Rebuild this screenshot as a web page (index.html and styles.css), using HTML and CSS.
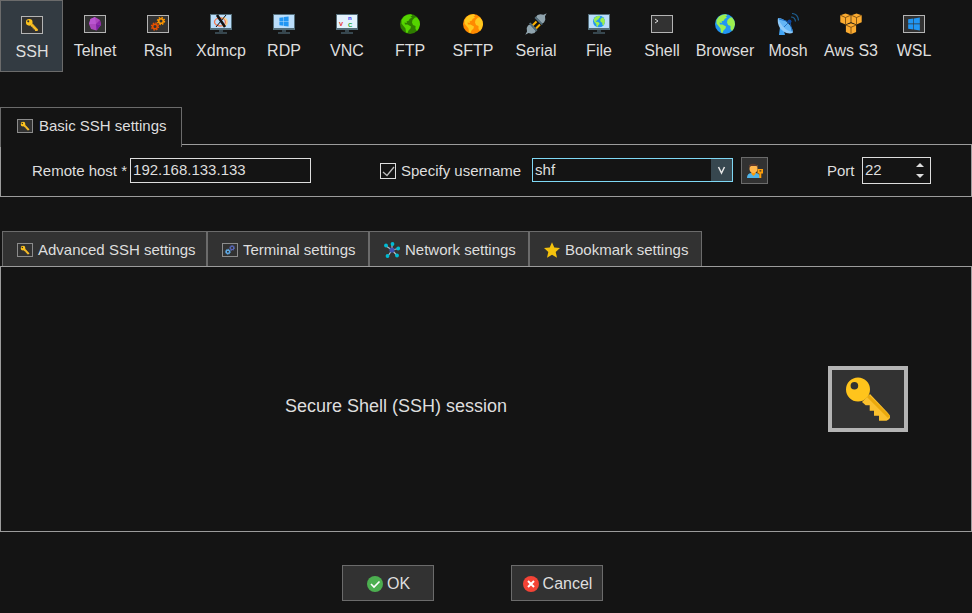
FILE: index.html
```html
<!DOCTYPE html>
<html lang="en">
<head>
<meta charset="utf-8">
<title>Session settings</title>
<link rel="stylesheet" href="styles.css">
</head>
<body>
<svg class="defs" aria-hidden="true">
  <symbol id="key" viewBox="0 0 72 58">
    <path d="M30 32 33.7 35.3H37.7V40.7H42V45.7H47V50.7H54.5Q58.5 49 58 46.5Q57.500 44.500 55.500 42.500L38 24Z" fill="#fbc02d"/>
    <path d="M36 26 57 47" stroke="#eaa80c" stroke-width="3" fill="none"/>
    <path fill-rule="evenodd" d="M26 7.400a12 12 0 1 1 0 24 12 12 0 0 1 0-24Zm-3.600 4.600a3.800 3.800 0 1 0 0 7.600 3.800 3.800 0 0 0 0-7.600Z" fill="#ffc41c"/>
  </symbol>
  <symbol id="gears" viewBox="0 0 20 16">
    <g fill="none" stroke="currentColor">
      <circle cx="7" cy="10.500" r="2.300" stroke-width="1.600"/>
      <circle cx="7" cy="10.500" r="3.500" stroke-width="1.400" stroke-dasharray="1.500 1.250"/>
    </g>
    <g fill="none">
      <circle cx="13" cy="5" r="2.300" stroke-width="1.600"/>
      <circle cx="13" cy="5" r="3.500" stroke-width="1.400" stroke-dasharray="1.500 1.250"/>
    </g>
  </symbol>
  <symbol id="monitor" viewBox="0 0 22 22">
    <path d="M9 16h4v3h4v2H5v-2h4Z" fill="#37474f"/>
    <path d="M0 1h22v16H0Z" fill="#546e7a"/>
    <path d="M1 2h20v13H1Z" fill="#bbdefb"/>
  </symbol>
  <symbol id="windows" viewBox="0 0 12 12">
    <path d="M1 2 5.500 1.300V5.600H1ZM6 1.200 11 .5V5.600H6ZM1 6.200H5.500V10.700L1 10ZM6 6.200H11V11.500L6 10.800Z" fill="#2196f3"/>
  </symbol>
  <symbol id="globe" viewBox="0 0 20 20">
    <circle cx="10" cy="10" r="10" class="sea"/>
    <path class="land" d="M1.500 6 4 2.500 7.500.8 11 .3 12.500 1.500 10.500 2.500 12 3.500 9.500 5 9 6.500 6.500 7.500 7 9 4.500 8.500 5 10.500 7.500 10.500 11 12.500 10.500 14.500 8.500 16.500 7.500 19 6 18.500 5.500 14.500 3.500 12 1.500 9.500ZM12.500 6 15 3.500 17 3.500 19.500 7 20 10.500 18.500 15 17 17 15.500 15 15.500 12 13 11 12 8.500Z"/>
  </symbol>
  <symbol id="cube" viewBox="0 0 11 12">
    <path d="M5.500.5 10.700 2.200V9.300L5.500 11.500.3 9.300V2.200Z" fill="#fbab30"/>
    <path d="M.3 2.200 5.500 4.500l5.200-2.300M5.500 4.500v7" fill="none" stroke="#6d430c" stroke-width=".8"/>
  </symbol>
</svg>

<nav class="toolbar" aria-label="Session type">
  <button class="type active" type="button"><svg class="icon framed" viewBox="0 0 20 16"><use href="#key"/></svg><span>SSH</span></button>
  <button class="type" type="button"><svg class="icon framed" viewBox="0 0 20 16"><path d="m10 1 5 3 1 5-4.500 5.500L6 13 4 8l1.500-5Z" fill="#ab47bc"/><path d="m10 1 1 7-7 0 1.500-5Z" fill="#ba55d0"/><path d="m11 8 5 1-4.500 5.500Z" fill="#7b1fa2"/><path d="m11 8 4-4 1 5Z" fill="#8e24aa"/></svg><span>Telnet</span></button>
  <button class="type" type="button"><svg class="icon framed gears-hot" viewBox="0 0 20 16"><use href="#gears"/></svg><span>Rsh</span></button>
  <button class="type" type="button"><svg class="icon" viewBox="0 0 22 22"><use href="#monitor"/><ellipse cx="10" cy="9" rx="5.500" ry="4" fill="none" stroke="#f4774f" stroke-width="1.300"/><path d="M12 5q5 0 5 4t-5 4" fill="none" stroke="#ffcc80" stroke-width="1.500"/><path d="m7 2 8 12" stroke="#111" stroke-width="2.600"/><path d="M16 2 6 14" stroke="#111" stroke-width="1"/></svg><span>Xdmcp</span></button>
  <button class="type" type="button"><svg class="icon" viewBox="0 0 22 22"><use href="#monitor"/><use href="#windows" x="5" y="3" width="12" height="11"/></svg><span>RDP</span></button>
  <button class="type" type="button"><svg class="icon vnc" viewBox="0 0 22 22"><use href="#monitor"/><path d="M1 2h20v13H1Z" fill="#e3f2fd"/><text x="3" y="13" fill="#e91e1e">V</text><text x="12" y="7" fill="#2b35f0">n</text><text x="12" y="14" fill="#18a52c">C</text></svg><span>VNC</span></button>
  <button class="type" type="button"><svg class="icon globe-green" viewBox="0 0 22 22"><use href="#globe" x="1" y="1" width="20" height="20"/></svg><span>FTP</span></button>
  <button class="type" type="button"><svg class="icon globe-orange" viewBox="0 0 22 22"><use href="#globe" x="1" y="1" width="20" height="20"/></svg><span>SFTP</span></button>
  <button class="type" type="button"><svg class="icon" viewBox="0 0 22 22"><path d="m7.500 12.500 4-4M11 15.500l4-4" stroke="#ffb300" stroke-width="2"/><path d="m.3 21.700 1.700-3.200-.3-3.500L3 12.500l2-1L11 18l-1.500 2-3 .8-3-.8Z" fill="#90a4ae"/><path d="m4 10.500 1.500-1 7 7.500-1.200 1.500Z" fill="#546e7a"/><path d="m21.700.3-1.700 3 .3 3.500L19 9.500l-2 1L11 4l1.500-2 3-.8 3 .5Z" fill="#90a4ae"/><path d="m9.500 5 1.200-1.500L18 11l-1.500 1Z" fill="#546e7a"/></svg><span>Serial</span></button>
  <button class="type" type="button"><svg class="icon globe-blue" viewBox="0 0 22 22"><use href="#monitor"/><use href="#globe" x="5" y="2.500" width="12" height="12"/></svg><span>File</span></button>
  <button class="type" type="button"><svg class="icon framed" viewBox="0 0 20 16"><path d="m3 3 3 2-3 2" fill="none" stroke="#ddd"/></svg><span>Shell</span></button>
  <button class="type" type="button"><svg class="icon globe-blue" viewBox="0 0 22 22"><use href="#globe" x="1" y="1" width="20" height="20"/></svg><span>Browser</span></button>
  <button class="type" type="button"><svg class="icon" viewBox="0 0 22 22"><path d="M3 14 7 18l1 4H2Z" fill="#42a5f5"/><path d="M1 5C0 10 2 15 6 18s8 3 10 1.500Z" fill="#90caf9"/><path d="M1 5q5 0 10 5t5 9.500Q10 18 6 13.500T1 5Z" fill="#64b5f6"/><path d="m2 6 11 3 2 9M7 14l5-5" stroke="#1565c0" stroke-width=".8" fill="none"/><circle cx="12.500" cy="8.500" r="2" fill="#0d47a1"/><path d="M14 4q4 0 4.500 4.500M15 .5q6 .5 6.500 7" stroke="#1e5f91" stroke-width="1.200" fill="none"/></svg><span>Mosh</span></button>
  <button class="type" type="button"><svg class="icon" viewBox="0 0 22 22"><use href="#cube" width="11" height="12" y="0"/><use href="#cube" x="11" width="11" height="12"/><use href="#cube" x="5.500" y="9.800" width="11" height="12"/></svg><span>Aws S3</span></button>
  <button class="type" type="button"><svg class="icon framed" viewBox="0 0 20 16"><use href="#windows" x="3" y="1" width="14" height="14"/></svg><span>WSL</span></button>
</nav>

<main>
  <section class="basic">
    <h2 class="basic-tab"><svg class="small framed" viewBox="0 0 14 12"><use href="#key"/></svg><span>Basic SSH settings</span></h2>
    <form class="panel fields">
      <div class="field">
        <label for="host">Remote host *</label>
        <input class="box host" id="host" type="text" value="192.168.133.133">
      </div>
      <div class="field">
        <input class="check" id="specify" type="checkbox" checked>
        <label class="check-label" for="specify">Specify username</label>
        <span class="combo">
          <select class="box" aria-label="Username"><option>shf</option></select>
          <svg class="combo-arrow" viewBox="0 0 20 22"><path d="m7 8 3 6 3-6" fill="none" stroke="#e6e6e6" stroke-width="1.500"/></svg>
        </span>
        <button class="user-button" type="button" aria-label="Manage users"><svg viewBox="0 0 18 16"><path d="M1 15q0-5 5-5h3q5 0 5 5Z" fill="#4fb3e8"/><path d="M5.500 9h4v2l-2 2-2-2Z" fill="#ff9800"/><path d="M3.500 4Q3 10 7.500 10T11.500 4V2.500h-8Z" fill="#ffb74d"/><path d="M3 5Q2.500.8 7 .8T12 5L10.500 3 5 3Z" fill="#5d3b2e"/><path fill-rule="evenodd" d="M11.500 6H17v4.500h-1.700V15h-2v-4.500h-1.800Zm2 1.200h1.800V8.500H13.500Z" fill="#ff9f0a"/></svg></button>
      </div>
      <div class="field">
        <label class="port-label" for="port">Port</label>
        <span class="box spinner">
          <input id="port" type="number" value="22">
          <span class="steps">
            <button type="button" aria-label="Increase port"><svg viewBox="0 0 8 4"><path d="M0 4 4 0l4 4Z"/></svg></button>
            <button type="button" aria-label="Decrease port"><svg viewBox="0 0 8 4"><path d="M0 0h8L4 4Z"/></svg></button>
          </span>
        </span>
      </div>
    </form>
  </section>

  <section class="advanced">
    <div class="tabs">
      <button class="tab" type="button"><svg class="small framed" viewBox="0 0 14 12"><use href="#key"/></svg><span>Advanced SSH settings</span></button>
      <button class="tab" type="button"><svg class="small framed gears-cool" viewBox="0 0 14 12"><use href="#gears"/></svg><span>Terminal settings</span></button>
      <button class="tab" type="button"><svg class="small" viewBox="0 0 16 16"><path d="M8 8 8 2M8 8 2 4M8 8l6.500-1.500M8 8 4 14M8 8l5 5.500" stroke="#b0bec5" stroke-width="1.200"/><circle cx="8" cy="8" r="2.600" fill="#3f51b5"/><g fill="#00bcd4"><circle cx="8.500" cy="2" r="1.900"/><circle cx="2" cy="3.500" r="1.900"/><circle cx="14.200" cy="6.500" r="1.900"/><circle cx="3.500" cy="14" r="1.900"/><circle cx="13" cy="13.500" r="1.900"/></g></svg><span>Network settings</span></button>
      <button class="tab" type="button"><svg class="small" viewBox="0 0 16 16"><path d="m8 .3 2.300 5.300 5.700.5-4.300 3.800 1.300 5.800L8 12.700l-5 3 1.300-5.800L0 6.100l5.700-.5Z" fill="#f4c20d"/></svg><span>Bookmark settings</span></button>
    </div>
    <div class="panel summary">
      <p>Secure Shell (SSH) session</p>
      <svg class="summary-key" viewBox="0 0 72 58"><use href="#key"/></svg>
    </div>
  </section>
</main>

<footer class="actions">
  <button class="action" type="button"><svg class="small" viewBox="0 0 16 16"><circle cx="8" cy="8" r="8" fill="#4caf50"/><path d="m4 8 3 3 5.500-5.500" fill="none" stroke="#fff" stroke-width="1.600"/></svg><span>OK</span></button>
  <button class="action" type="button"><svg class="small" viewBox="0 0 16 16"><circle cx="8" cy="8" r="8" fill="#f44336"/><path d="m5 5 6 6M11 5l-6 6" stroke="#fff" stroke-width="2"/></svg><span>Cancel</span></button>
</footer>
</body>
</html>
```
FILE: styles.css
```css
* { box-sizing: border-box; }

body {
  margin: 0;
  background: #141414;
  color: #dedede;
  font: 15px/18px "Liberation Sans", Arial, sans-serif;
}

button, input, select {
  margin: 0;
  padding: 0;
  color: inherit;
  font: inherit;
}

svg { display: block; flex: none; }
.defs { position: absolute; width: 0; height: 0; }

.toolbar {
  display: grid;
  grid-template-columns: repeat(15, 63px);
}

.type {
  display: flex;
  flex-direction: column;
  align-items: center;
  gap: 7px;
  height: 72px;
  padding: 12px 0 0 1px;
  border: 1px solid transparent;
  background: none;
  font-size: 16px;
  white-space: nowrap;
}

.type.active {
  padding-top: 13px;
  border-color: #6b6b6b;
  background: #333b42;
}

.icon { width: 22px; height: 22px; }

.framed {
  border: 1px solid #b4b4b4;
  background: #323232;
}

.icon.framed { height: 18px; margin: 2px 0; }

.small { width: 16px; height: 16px; }
.small.framed { height: 14px; border-color: #8c8c8c; }

.vnc text { font: bold 6px "Liberation Sans", sans-serif; }

.gears-hot { color: #e65100; stroke: #ff9800; }
.gears-cool { color: #64b5f6; stroke: #5c6bc0; }

.globe-green { --sea: #2f7d00; --land: #55d400; }
.globe-orange { --sea: #ff8a00; --land: #ffc81e; }
.globe-blue { --sea: #2196f3; --land: #9cf04e; }
.sea { fill: var(--sea); }
.land { fill: var(--land); }

.basic { margin-top: 35px; }

.basic-tab {
  position: relative;
  display: flex;
  align-items: center;
  gap: 6px;
  width: 182px;
  height: 40px;
  margin: 0 0 -3px;
  padding: 0 16px 4px;
  border: 1px solid #6b6b6b;
  border-bottom: 0;
  background: #141414;
  font-size: 15px;
  font-weight: normal;
  white-space: nowrap;
}

.panel { border: 1px solid #9c9c9c; }

.fields {
  display: grid;
  grid-template-columns: 348fr 447fr 144fr;
  align-items: center;
  height: 53px;
  padding-left: 31px;
}

.field { display: flex; align-items: center; }

.box {
  height: 25px;
  border: 1px solid #dedede;
  border-radius: 0;
  background: #141414;
}

.host { width: 181px; margin-left: 3px; padding: 0 2px 2px; }

.check {
  appearance: none;
  width: 16px;
  height: 16px;
  border: 1px solid #dedede;
  background: url("data:image/svg+xml,%3Csvg xmlns='http://www.w3.org/2000/svg' viewBox='0 0 14 14'%3E%3Cpath d='m2 8 4 3.500 7-8.500' fill='none' stroke='%23bbb' stroke-width='1.300'/%3E%3C/svg%3E");
}

.check-label { margin-left: 5px; }

.combo { position: relative; margin: 0 0 2px 11px; }

.combo select {
  display: block;
  width: 201px;
  height: 24px;
  padding: 0 22px 0 2px;
  appearance: none;
  border-color: #7fd8f5;
}

.combo-arrow {
  position: absolute;
  top: 1px;
  right: 1px;
  width: 21px;
  height: 22px;
  background: #37474f;
  pointer-events: none;
}

.user-button {
  display: grid;
  place-items: center;
  width: 27px;
  height: 27px;
  margin-left: 8px;
  border: 1px solid #6b6b6b;
  background: #323232;
}

.user-button svg { width: 18px; height: 16px; }

.port-label { width: 35px; }

.spinner { display: flex; width: 69px; height: 27px; }

.spinner input {
  flex: 1;
  min-width: 0;
  padding: 0 0 2px 2px;
  border: 0;
  background: none;
  appearance: textfield;
}

.spinner input::-webkit-inner-spin-button { display: none; }

.steps { display: grid; width: 20px; padding: 2px 0; }

.steps button {
  display: grid;
  place-items: center;
  border: 0;
  background: none;
}

.steps svg { width: 8px; height: 4px; fill: #dedede; }

.advanced { margin-top: 34px; }

.tabs {
  display: grid;
  grid-template-columns: 205px 162px 160px 173px;
  padding-left: 2px;
}

.tab {
  display: flex;
  align-items: center;
  gap: 5px;
  height: 35px;
  padding: 1px 0 0 14px;
  border: 1px solid #6b6b6b;
  border-bottom: 0;
  background: #323232;
  white-space: nowrap;
}

.summary {
  display: grid;
  grid-template-columns: 790fr 180fr;
  align-items: center;
  height: 266px;
}

.summary p {
  margin: 14px 0 0;
  font-size: 18px;
  text-align: center;
}

.summary-key {
  width: 80px;
  height: 66px;
  margin-left: 37px;
  border: 4px solid #b4b4b4;
  background: #323232;
}

.actions {
  display: flex;
  justify-content: center;
  gap: 77px;
  margin-top: 33px;
  padding-right: 27px;
}

.action {
  display: flex;
  align-items: center;
  justify-content: center;
  gap: 4px;
  width: 92px;
  height: 36px;
  padding: 1px 0 0 1px;
  border: 1px solid #6b6b6b;
  background: #323232;
  font-size: 16px;
}
```
